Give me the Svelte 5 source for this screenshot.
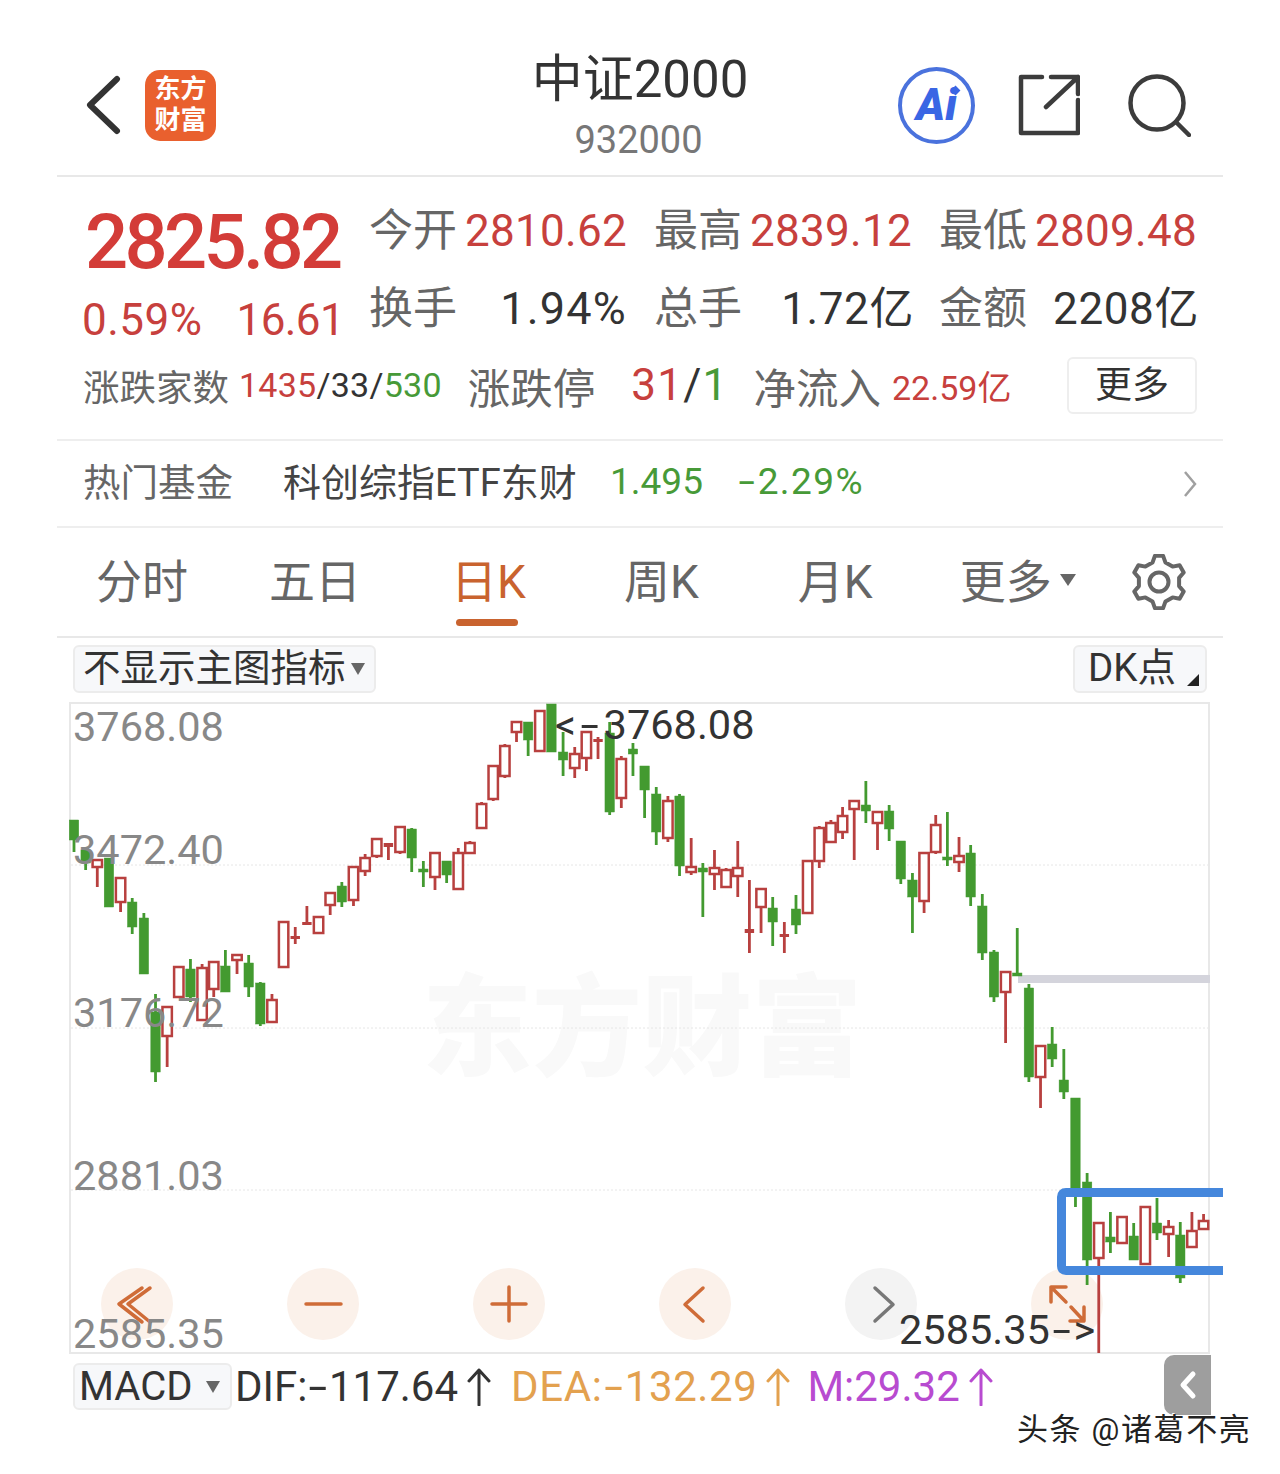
<script>
  const U = 1, D = 0;
  // [dir, high, bodyTop, bodyBottom, low]
  const raw = [
    [D,820,820,840,852],[D,847,850,863,870],[U,860,860,867,887],[D,858,858,907,907],[U,878,878,902,912],
    [D,898,902,927,934],[D,913,918,974,974],[D,994,1012,1072,1082],[U,1007,1007,1036,1067],[U,966,967,997,997],
    [D,959,969,997,1002],[U,964,968,1020,1020],[U,962,962,989,997],[D,950,966,992,992],[U,955,955,960,974],
    [D,955,963,987,997],[D,982,983,1024,1026],[U,994,1000,1022,1023],[U,922,922,967,967],[U,927,936,938,944],
    [U,906,922,925,925],[U,917,917,933,933],[U,893,893,905,915],[D,882,886,902,907],[U,867,867,900,906],
    [U,854,858,871,876],[U,839,839,856,858],[U,843,843,847,860],[U,827,827,852,854],[D,828,829,858,872],
    [D,861,869,872,887],[U,853,853,877,890],[D,861,861,875,883],[U,848,853,889,889],[U,841,843,853,853],
    [U,802,804,828,828],[U,766,766,799,801],[U,744,746,776,778],[U,722,722,732,742],[D,722,722,740,756],
    [U,711,711,751,751],[D,704,704,752,752],[D,732,752,760,776],[U,747,754,768,778],[U,732,732,758,771],
    [U,737,739,742,759],[D,722,733,812,815],[U,756,759,798,808],[D,743,749,754,776],[D,766,766,790,818],
    [D,787,794,832,845],[U,796,801,838,842],[D,794,796,866,876],[U,838,867,872,875],[D,863,868,872,917],
    [U,850,868,874,890],[U,868,870,887,888],[U,841,868,876,897],[U,880,929,933,953],[U,889,889,907,933],
    [D,897,908,922,946],[U,922,934,937,953],[D,895,909,925,934],[U,861,861,913,913],[U,826,828,861,868],
    [U,820,823,842,842],[U,807,816,832,839],[U,801,801,809,860],[D,781,805,811,823],[U,812,812,823,850],
    [D,805,811,829,841],[D,841,841,879,884],[D,873,880,897,933],[U,853,853,901,913],[U,815,825,852,854],
    [D,812,857,860,866],[U,837,856,862,872],[D,845,853,897,906],[D,894,906,953,960],[D,950,952,997,1002],
    [U,972,972,992,1043],[D,928,973,975,975],[D,984,988,1077,1082],[U,1046,1046,1077,1108],[D,1027,1044,1059,1067],
    [D,1049,1080,1092,1099],[D,1098,1098,1190,1207],[D,1173,1182,1260,1285],[U,1223,1223,1258,1353],[D,1212,1237,1242,1253],
    [U,1217,1217,1243,1243],[D,1223,1236,1260,1260],[U,1207,1207,1264,1264],[D,1198,1223,1233,1240],[U,1220,1227,1234,1257],
    [D,1222,1235,1278,1283],[U,1212,1231,1247,1247],[U,1214,1221,1229,1229]
  ];
  const candles = raw.map(([dir, high, top, bottom, low], i) => ({
    x: 74 + i * 11.645, dir, high, top, bottom, low
  }));

  const axis = [
    { text: '3768.08', y: 727 }, { text: '3472.40', y: 850 }, { text: '3176.72', y: 1013 },
    { text: '2881.03', y: 1176 }, { text: '2585.35', y: 1334 }
  ];
  const grid = [865, 1028, 1190];
  const controls = [137, 323, 509, 695, 881, 1067];

  function gearPath(cx, cy) {
    const pts = [];
    const teeth = 6;
    for (let i = 0; i < teeth; i++) {
      const a = (i / teeth) * Math.PI * 2 - Math.PI / 2;
      const s = Math.PI / teeth;
      const seq = [[-0.62, 20.5], [-0.3, 26.5], [0.3, 26.5], [0.62, 20.5]];
      for (const [k, r] of seq) {
        const t = a + k * s;
        pts.push(`${(cx + r * Math.cos(t)).toFixed(1)} ${(cy + r * Math.sin(t)).toFixed(1)}`);
      }
    }
    return 'M' + pts.join('L') + 'Z';
  }
  const gear = gearPath(28, 28);
</script>

<div class="page">
  <div class="panel">
    <header class="header">
      <div class="h-left">
        <svg class="back" viewBox="0 0 40 60" width="40" height="60"><path d="M32 4 L5 30 L32 56" /></svg>
        <div class="logo"><span>东方</span><span>财富</span></div>
      </div>
      <div class="title">
        <div class="name">中证2000</div>
        <div class="code">932000</div>
      </div>
      <div class="h-right">
        <div class="ai"><span>Ai</span><i class="spark"></i></div>
        <svg class="share" viewBox="0 0 62 62" width="62" height="62">
          <path d="M24 3 H3 V59 H60 V26" />
          <path d="M28 33 L60 3 M33 3 H60 V20" />
        </svg>
        <svg class="search" viewBox="0 0 64 64" width="64" height="64">
          <circle cx="30" cy="30" r="26.5" />
          <path d="M49 49 L62 62" />
        </svg>
      </div>
    </header>

    <section class="quote">
      <div class="q-top">
        <div class="q-left">
          <div class="price">2825.82</div>
          <div class="change"><span class="c-pct">0.59%</span><span class="c-abs">16.61</span></div>
        </div>
        <div class="q-grid">
          <div class="cell"><span class="lab">今开</span><span class="up">2810.62</span></div>
          <div class="cell"><span class="lab">最高</span><span class="up">2839.12</span></div>
          <div class="cell"><span class="lab">最低</span><span class="up">2809.48</span></div>
          <div class="cell"><span class="lab">换手</span><span class="val">1.94%</span></div>
          <div class="cell"><span class="lab">总手</span><span class="val yi">1.72亿</span></div>
          <div class="cell"><span class="lab">金额</span><span class="val yi">2208亿</span></div>
        </div>
      </div>
      <div class="breadth">
        <span class="b-lab">涨跌家数</span>
        <span class="b-num"><b class="up">1435</b>/33/<b class="down">530</b></span>
        <span class="lab b-stop">涨跌停</span>
        <span class="b-limit"><b class="up">31</b>/<b class="down">1</b></span>
        <span class="lab b-flow">净流入</span>
        <span class="b-in up">22.59亿</span>
        <span class="more-btn"><span>更多</span></span>
      </div>
    </section>

    <section class="fund">
      <span class="f-lab">热门基金</span>
      <span class="f-name">科创综指ETF东财</span>
      <span class="f-num down">1.495</span>
      <span class="f-pct down"><span class="dash">-</span>2.29%</span>
      <svg class="f-chev" viewBox="0 0 14 28" width="14" height="28"><path d="M2 2 L12 14 L2 26" /></svg>
    </section>

    <nav class="tabs">
      <span class="tab first">分时</span>
      <span class="tab">五日</span>
      <span class="tab active">日K</span>
      <span class="tab">周K</span>
      <span class="tab month">月K</span>
      <span class="tab drop">更多<i class="tri"></i></span>
      <svg class="gear" viewBox="0 0 56 56" width="56" height="56">
        <path d={gear} /><circle cx="28" cy="28" r="9.5" />
      </svg>
    </nav>

    <div class="subbar">
      <div class="chip main"><span class="lift">不显示主图指标</span><i class="tri small"></i></div>
      <div class="chip dk"><span class="lift">DK点</span><i class="corner"></i></div>
    </div>

    <div class="chart">
      <div class="mark">东方财富</div>
      {#each controls as cx, i}
        <div class="ctl" class:gray={i === 4} style="left:{cx - 69 - 36}px"></div>
      {/each}
      <svg class="plot" viewBox="69 702 1154 652" width="1154" height="652">
        {#each grid as y}
          <line class="gridline" x1="71" x2="1208" y1={y} y2={y} />
        {/each}
        <rect class="hold" x="1018" y="975" width="192" height="8" />
        {#each candles as c}
          <g class={c.dir === 1 ? 'red' : 'green'}>
            <line class="wick" x1={c.x} x2={c.x} y1={c.high} y2={c.low} />
            {#if c.dir === 1 && c.bottom - c.top > 4}
              <rect class="hollow" x={c.x - 4.7} y={c.top} width="9.4" height={c.bottom - c.top} />
            {:else}
              <rect class="solid" x={c.x - 4.7} y={c.top} width="9.4" height={Math.max(c.bottom - c.top, 3)} />
            {/if}
          </g>
        {/each}
        <path class="frame" d="M1223 1192.5 H1066 Q1061.5 1192.5 1061.5 1197 V1266 Q1061.5 1270.5 1066 1270.5 H1223" />
        <g class="ic orange">
          <path d="M119 1304 L142 1288 M119 1304 L142 1322 M128 1304 L150 1288 M128 1304 L150 1322" />
          <path d="M306 1304 H341" />
          <path d="M492 1304 H526 M509 1287 V1321" />
          <path d="M703 1288 L685 1304.5 L703 1321" />
          <path d="M1051 1287 H1066 M1051 1287 V1302 M1051 1287 L1066 1302 M1084 1321 H1070 M1084 1321 V1307 M1084 1321 L1071 1307" />
        </g>
        <path class="ic next" d="M875 1288 L893 1304.5 L875 1321" />
      </svg>
      {#each axis as a}
        <span class="axis" style="top:{a.y - 702 - 25}px">{a.text}</span>
      {/each}
      <span class="peak">&lt;<span class="dash">-</span>3768.08</span>
      <span class="trough">2585.35<span class="dash">-</span>&gt;</span>
    </div>

    <div class="macd">
      <div class="chip mc">MACD<i class="tri small"></i></div>
      <span class="m dif">DIF:<span class="dash">-</span>117.64<svg viewBox="0 0 24 38" width="24" height="38"><path d="M12 37 V2 M2 13 L12 2 L22 13" /></svg></span>
      <span class="m dea">DEA:<span class="dash">-</span>132.29<svg viewBox="0 0 24 38" width="24" height="38"><path d="M12 37 V2 M2 13 L12 2 L22 13" /></svg></span>
      <span class="m mm">M:29.32<svg viewBox="0 0 24 38" width="24" height="38"><path d="M12 37 V2 M2 13 L12 2 L22 13" /></svg></span>
    </div>
  </div>

  <button class="collapse" aria-label="收起"><svg viewBox="0 0 20 30" width="20" height="30"><path d="M15 4 L5 15 L15 26" /></svg></button>
  <div class="credit">头条 @诸葛不亮</div>
</div>

<style>
  :global(body) { margin: 0; background: #fff; }
  .page {
    position: relative;
    width: 1280px;
    height: 1474px;
    overflow: hidden;
    background: #fff;
    font-family: Roboto, "Noto Sans CJK SC", sans-serif;
    color: #333;
  }
  .panel { margin-left: 57px; width: 1166px; }
  .up { color: #c7403d; font-weight: 400; }
  .down { color: #479a38; font-weight: 400; }
  .dash { display: inline-block; transform: scaleX(1.6); }

  .header {
    height: 177px;
    box-sizing: border-box;
    border-bottom: 2px solid #e8e8e8;
    display: grid;
    grid-template-columns: 1fr auto 1fr;
  }
  .h-left { display: flex; align-items: center; padding: 34px 0 0 28px; height: 176px; box-sizing: border-box; gap: 20px; }
  .back path { fill: none; stroke: #333; stroke-width: 6; stroke-linecap: round; stroke-linejoin: round; }
  .logo {
    width: 71px; height: 71px; box-sizing: border-box;
    border-radius: 15px;
    background: #e9602e;
    color: #fff;
    display: flex; flex-direction: column; align-items: center; justify-content: center;
    font-size: 26px; line-height: 31px; font-weight: 700;
    flex-shrink: 0;
  }
  .title { padding-top: 50px; text-align: center; }
  .name { font-size: 51px; line-height: 60px; color: #333; }
  .code { font-size: 38px; line-height: 44px; margin-top: 8px; margin-right: 3px; color: #777; }
  .h-right { display: flex; align-items: center; justify-content: flex-end; gap: 43px; padding: 34px 32px 0 0; height: 176px; box-sizing: border-box; }
  .ai {
    position: relative;
    width: 77px; height: 77px; box-sizing: border-box;
    border: 4px solid #4a72dd; border-radius: 50%;
    display: flex; align-items: center; justify-content: center;
    color: #3a66e4; font-size: 44px; font-weight: 900; font-style: italic; line-height: 1;
  }
  .spark {
    position: absolute; left: 50px; top: 16px;
    width: 7px; height: 7px; background: #3a66e4; transform: rotate(45deg);
  }
  .share path, .search circle, .search path { fill: none; stroke: #3c3c3c; stroke-width: 4.5; stroke-linecap: round; stroke-linejoin: round; }
  .search { margin-left: 4px; }

  .quote {
    box-sizing: border-box;
    height: 264px;
    padding: 25px 26px 0;
    border-bottom: 2px solid #eee;
  }
  .q-top { display: flex; height: 140px; }
  .q-left { width: 287px; }
  .price {
    font-size: 76px; line-height: 76px; font-weight: 500;
    color: #d33c38; letter-spacing: -3.7px; padding: 2px 0 0 2px; margin-bottom: -2px;
  }
  .change {
    display: flex; gap: 34px;
    margin-top: 20px; margin-left: -1px;
    font-size: 44px; line-height: 44px; color: #c7403d;
  }
  .c-pct { letter-spacing: 0.5px; }
  .c-abs { letter-spacing: -0.6px; }
  .q-grid {
    display: grid;
    grid-template-columns: repeat(3, 257px);
    column-gap: 28px;
    row-gap: 28px;
    align-content: start;
    padding-top: 4px;
  }
  .cell { display: flex; justify-content: space-between; font-size: 44px; line-height: 50px; letter-spacing: 0.3px; }
  .lab { font-size: 44px; color: #666; letter-spacing: 0; margin-left: -1px; }
  .val { color: #333; font-size: 45px; letter-spacing: 1.2px; }
  .val.yi { font-size: 44px; letter-spacing: 0.6px; margin-right: -2px; }

  .breadth { display: flex; align-items: center; height: 56px; margin-top: 15px; white-space: nowrap; }
  .b-lab { font-size: 36.5px; color: #666; width: 156px; }
  .b-num { font-size: 34px; color: #333; letter-spacing: 0.25px; }
  .b-num b, .b-limit b { font-weight: 400; }
  .lab.b-stop { margin-left: 26px; font-size: 42.5px; }
  .b-limit { margin-left: 36px; font-size: 44px; color: #333; letter-spacing: 1.2px; }
  .lab.b-flow { margin-left: 25px; font-size: 42.5px; }
  .b-in { margin-left: 11px; font-size: 34px; }
  .more-btn {
    margin-left: auto;
    width: 130px; height: 57px; box-sizing: border-box;
    border: 2px solid #eee; border-radius: 6px;
    display: flex; align-items: center; justify-content: center;
    font-size: 37px; color: #333;
  }
  .more-btn span { padding-bottom: 7px; }

  .fund {
    box-sizing: border-box;
    height: 87px;
    border-bottom: 2px solid #eee;
    display: flex; align-items: center;
    padding: 0 26px 4px;
    white-space: nowrap;
  }
  .f-lab { font-size: 37.5px; color: #666; width: 200px; padding-bottom: 4px; }
  .f-name { font-size: 38px; color: #444; width: 327px; padding-bottom: 4px; }
  .f-num { font-size: 37px; width: 128px; }
  .f-pct { font-size: 37px; letter-spacing: 1.4px; }
  .f-pct .dash { margin: 0 4px; }
  .f-chev { margin-left: auto; margin-top: 4px; }
  .f-chev path { fill: none; stroke: #a0a0a0; stroke-width: 2.5; }

  .tabs {
    box-sizing: border-box;
    height: 110px;
    border-bottom: 2px solid #e8e8e8;
    display: flex; align-items: center;
    gap: 93px;
    padding: 0 36px 0 39px;
    position: relative;
  }
  .tab { font-size: 46px; line-height: 60px; color: #666; position: relative; white-space: nowrap; }
  .tab.first { margin-right: -12px; }
  .tab.active { margin-left: -3px; margin-right: 5px; color: #c9632f; }
  .tab.month { margin-left: 6px; margin-right: -6px; }
  .tab.active::after {
    content: ""; position: absolute; left: 5px; top: 67px;
    width: 62px; height: 7px; border-radius: 4px; background: #c9632f;
  }
  .tab.drop { display: flex; align-items: center; }
  .tri { display: inline-block; width: 0; height: 0; margin-left: 8px; margin-bottom: 4px;
    border-left: 8px solid transparent; border-right: 8px solid transparent; border-top: 12px solid #666; }
  .tri.small { border-left-width: 7px; border-right-width: 7px; border-top-width: 12px; margin-left: 5px; margin-bottom: 0; }
  .gear { margin-left: -38px; flex-shrink: 0; }
  .gear path, .gear circle { fill: none; stroke: #666; stroke-width: 4; stroke-linejoin: round; }

  .subbar {
    height: 64px;
    box-sizing: border-box;
    padding: 7px 16px 0;
    display: flex; justify-content: space-between; align-items: flex-start;
  }
  .chip {
    box-sizing: border-box;
    height: 48px;
    background: #f7f8fa;
    border: 2px solid #ececec;
    border-radius: 6px;
    display: flex; align-items: center;
    color: #333;
    white-space: nowrap;
  }
  .lift { padding-bottom: 3px; line-height: 44px; }
  .chip.main { width: 303px; padding-left: 8px; font-size: 37.5px; }
  .chip.dk { width: 134px; padding-left: 13px; font-size: 38.5px; position: relative; }
  .corner { position: absolute; right: 6px; bottom: 5px; width: 0; height: 0;
    border-left: 12px solid transparent; border-bottom: 12px solid #222; }

  .chart {
    position: relative;
    margin-left: 12px;
    width: 1141px;
    height: 652px;
    box-shadow: inset 0 0 0 2px #e8e8e8;
  }
  .plot { position: absolute; left: 0; top: 0; overflow: visible; }
  .mark {
    position: absolute; left: 353px; top: 268px;
    font-size: 110px; line-height: 120px; font-weight: 900;
    color: #f9f9f9; white-space: nowrap;
  }
  .ctl { position: absolute; top: 566px; width: 72px; height: 72px; border-radius: 50%; background: #fbf1ea; }
  .ctl.gray { background: #f3f3f3; }
  .gridline { stroke: #e6e6e6; stroke-width: 1; stroke-dasharray: 2 2; }
  .hold { fill: #d4d4dc; }
  .wick { stroke-width: 2.8; }
  .red .wick { stroke: #b8403f; }
  .green .wick { stroke: #439a30; }
  .hollow { fill: #fff; stroke: #b8403f; stroke-width: 2.5; }
  .red .solid { fill: #b8403f; }
  .green .solid { fill: #439a30; stroke: #439a30; stroke-width: 0.5; }
  .frame { fill: none; stroke: #4587dc; stroke-width: 9; }
  .ic { fill: none; stroke-linecap: round; stroke-linejoin: round; }
  .ic.orange { stroke: #cf6c38; stroke-width: 3.5; }
  .ic.next { stroke: #777; stroke-width: 3.5; }
  .axis {
    position: absolute; left: 4px;
    font-size: 41.5px; line-height: 50px; color: #888;
  }
  .peak {
    position: absolute; left: 486px; top: 0;
    font-size: 41.5px; line-height: 46px; color: #333; white-space: nowrap;
  }
  .peak .dash { margin: 0 8px; }
  .trough {
    position: absolute; left: 830px; top: 605px;
    font-size: 41.5px; line-height: 46px; color: #333; white-space: nowrap;
  }
  .trough .dash { margin: 0 6px; }

  .macd { display: flex; align-items: center; height: 47px; margin-top: 9px; padding-left: 16px; white-space: nowrap; }
  .chip.mc { width: 159px; height: 47px; padding-left: 4px; font-size: 40px; gap: 9px; }
  .m { display: flex; align-items: center; font-size: 42px; }
  .m .dash { margin: 0 5px; }
  .m svg { margin-left: 9px; }
  .m path { fill: none; stroke: currentColor; stroke-width: 3; stroke-linecap: round; stroke-linejoin: round; }
  .dif { margin-left: 3px; color: #333; }
  .dea { margin-left: 20px; color: #e3a14f; letter-spacing: 0.6px; }
  .mm { margin-left: 17px; color: #b84bd0; }

  .collapse {
    position: absolute; left: 1164px; top: 1355px;
    width: 47px; height: 60px; padding: 0; border: 0;
    background: #9e9e9e; border-radius: 10px 0 0 10px;
    display: flex; align-items: center; justify-content: center;
  }
  .collapse path { fill: none; stroke: #fff; stroke-width: 5; stroke-linecap: round; stroke-linejoin: round; }
  .credit {
    position: absolute; left: 1017px; top: 1408px;
    font-size: 31px; line-height: 44px; color: #222; letter-spacing: 1.6px;
    white-space: nowrap;
    text-shadow: 1px 1px 0 #fff, -1px -1px 0 #fff;
  }
</style>
